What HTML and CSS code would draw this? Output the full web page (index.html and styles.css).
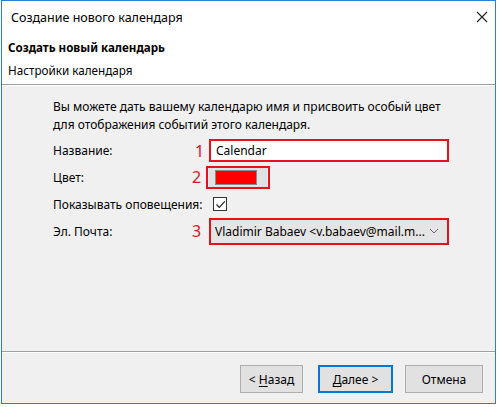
FILE: index.html
```html
<!DOCTYPE html>
<html lang="ru">
<head>
    <meta charset="UTF-8" />
    <title>Создание нового календаря</title>
    <link rel="stylesheet" href="styles.css">
</head>
<body>
    <div class="window">
        <div class="titlebar">
            <span class="title">Создание нового календаря</span>
            <svg class="close" width="12" height="12" viewBox="0 0 12 12">
                <path d="M1 1 L11 11 M11 1 L1 11" stroke="#222" stroke-width="1.1" fill="none" />
            </svg>
        </div>

        <div class="header">
            <div class="header-title">Создать новый календарь</div>
            <div class="header-sub">Настройки календаря</div>
        </div>

        <div class="content">
            <p class="intro">Вы можете дать вашему календарю имя и присвоить особый цвет<br>для отображения событий этого календаря.</p>

            <div class="form">
                <label class="label">Название:</label>
                <div class="field">
                    <span class="mark">1</span>
                    <div class="textbox">Calendar</div>
                </div>

                <label class="label">Цвет:</label>
                <div class="field">
                    <span class="mark mark-2">2</span>
                    <div class="color-wrap">
                        <div class="color-btn"><span class="swatch"></span></div>
                    </div>
                </div>

                <label class="label">Показывать оповещения:</label>
                <div class="field">
                    <span class="checkbox">
                        <svg width="11" height="11" viewBox="0 0 11 11">
                            <path d="M1.5 5.5 L4.3 8.3 L9.8 2.3" stroke="#222" stroke-width="1.2" fill="none" />
                        </svg>
                    </span>
                </div>

                <label class="label">Эл. Почта:</label>
                <div class="field">
                    <span class="mark mark-3">3</span>
                    <div class="combo">
                        <span class="combo-text">Vladimir Babaev &lt;v.babaev@mail.m...</span>
                        <svg class="chevron" width="10" height="6" viewBox="0 0 10 6">
                            <path d="M1 1 L5 5 L9 1" stroke="#666" stroke-width="1" fill="none" />
                        </svg>
                    </div>
                </div>
            </div>
        </div>

        <div class="footer">
            <button class="btn btn-back">&lt; <u>Н</u>азад</button>
            <button class="btn btn-next"><u>Д</u>алее &gt;</button>
            <button class="btn btn-cancel">Отмена</button>
        </div>
    </div>
</body>
</html>
```

FILE: styles.css
```css
body {
    margin: 0;
    background: #fff;
    font-family: "Noto Sans", "Open Sans", sans-serif;
    font-size: 12px;
    color: #000;
}

.window {
    box-sizing: border-box;
    width: 495px;
    height: 404px;
    margin-left: 1px;
    border: 1px solid #2b7fd4;
    display: flex;
    flex-direction: column;
    background: #f0f0f0;
}

.titlebar {
    height: 33px;
    display: flex;
    align-items: center;
    justify-content: space-between;
    padding: 0 7px 0 9px;
    background: #fff;
}

.title {
    font-size: 12.5px;
}

.close {
    margin-top: -1px;
}

.header {
    height: 51px;
    box-sizing: border-box;
    padding: 5px 0 0 6px;
    background: #fff;
    border-bottom: 1px solid #a0a0a0;
    line-height: 18px;
}

.header-title {
    font-weight: bold;
    font-size: 11.6px;
}

.header-sub {
    margin-top: 4px;
    font-size: 11.7px;
}

.content {
    flex: 1;
    padding: 12px 0 0 51px;
    border-top: 1px solid #fff;
    border-bottom: 1px solid #a0a0a0;
}

.intro {
    margin: 0 0 4px;
    line-height: 18px;
}

.form {
    display: grid;
    grid-template-columns: 156px 240px;
    grid-template-rows: 25px 28px 26px 28px;
    align-items: center;
}

.field {
    position: relative;
    display: flex;
    align-items: center;
}

/* red annotation numbers */
.mark {
    position: absolute;
    left: -14px;
    top: 50%;
    transform: translateY(-50%);
    color: #e8101a;
    font-size: 16px;
    line-height: 1;
}

.mark-2,
.mark-3 {
    left: -17px;
}

.textbox {
    box-sizing: border-box;
    width: 240px;
    height: 23px;
    border: 2px solid #e8101a;
    background: #fff;
    padding-left: 5px;
    line-height: 19px;
}

.color-wrap {
    box-sizing: border-box;
    width: 64px;
    height: 23px;
    margin-left: -3px;
    border: 2px solid #e8101a;
    padding: 0 1px;
}

.color-btn {
    height: 100%;
    background: #e1e1e1;
    display: flex;
    align-items: center;
    justify-content: center;
    padding-right: 4px;
    box-sizing: border-box;
}

.swatch {
    width: 40px;
    height: 13px;
    background: #ff0000;
    border: 1px solid #8a8a8a;
}

.checkbox {
    box-sizing: border-box;
    width: 14px;
    height: 14px;
    margin-left: 4px;
    border: 1px solid #333;
    background: #fff;
    display: flex;
    align-items: center;
    justify-content: center;
}

.combo {
    box-sizing: border-box;
    width: 240px;
    height: 27px;
    border: 2px solid #e8101a;
    background: #e5e5e5;
    display: flex;
    align-items: center;
    justify-content: space-between;
    padding: 0 8px 0 4px;
}

.footer {
    height: 51px;
    box-sizing: border-box;
    border-top: 1px solid #fff;
    display: flex;
    justify-content: flex-end;
    align-items: flex-start;
    padding: 12px 12px 0 0;
}

.btn {
    box-sizing: border-box;
    height: 28px;
    padding: 0;
    font-family: inherit;
    font-size: 12px;
    color: #000;
    background: #e1e1e1;
    border: 1px solid #adadad;
}

.btn u {
    text-underline-offset: 2px;
}

.btn-back {
    width: 63px;
}

.btn-next {
    width: 75px;
    margin-left: 15px;
    border: 2px solid #0078d7;
}

.btn-cancel {
    width: 78px;
    margin-left: 12px;
}
```
